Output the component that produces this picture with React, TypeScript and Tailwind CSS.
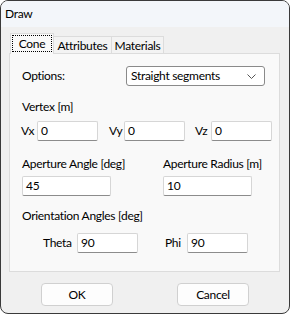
import React from 'react';

const font = { fontFamily: 'Lato, "Noto Sans", sans-serif', letterSpacing: '-0.3px' };

const TextBox: React.FC<{ value: string; className?: string }> = ({ value, className = '' }) => (
  <div
    className={`h-[20px] bg-white border border-[#d6d6d6] border-b-[#8c8c8c] rounded-[2px] flex items-center pl-[3px] text-[12px] leading-none text-black ${className}`}
  >
    {value}
  </div>
);

const Button: React.FC<{ label: string }> = ({ label }) => (
  <div className="w-[72px] h-[23px] bg-[#fdfdfd] border border-[#d0d0d0] rounded-[4px] flex items-center justify-center text-[12px] text-black">
    {label}
  </div>
);

const App: React.FC = () => {
  return (
    <div className="w-[291px] h-[315px] bg-white" style={font}>
      <div className="w-[290px] h-[314px] border border-[#3a3a3a] rounded-[8px] overflow-hidden flex flex-col bg-[#f0f0f0]">
        {/* title bar */}
        <div className="h-[26px] shrink-0 bg-[#f3f6fa] flex items-center pl-[4px] text-[12px] text-black">Draw</div>

        {/* tabs */}
        <div className="flex items-end h-[27px] pl-[9px] pt-[7px]">
          <div className="relative z-10 w-[44px] h-[21px] bg-[#f9f9f9] border border-[#dcdcdc] border-b-0 flex items-start justify-center pt-[1px]">
            <div className="w-[40px] h-[17px] border border-dotted border-black flex items-center justify-center text-[12px] leading-none">
              Cone
            </div>
          </div>
          <div className="w-[58px] h-[18px] bg-[#f3f3f3] border border-l-0 border-[#dcdcdc] border-b-0 flex items-center justify-center text-[12px] leading-none">
            Attributes
          </div>
          <div className="w-[52px] h-[18px] bg-[#f3f3f3] border border-l-0 border-[#dcdcdc] border-b-0 flex items-center justify-center text-[12px] leading-none">
            Materials
          </div>
        </div>

        {/* panel */}
        <div className="ml-[8px] w-[271px] h-[219px] -mt-px bg-[#f9f9f9] border border-[#dcdcdc] text-[12px] text-black">
          <div className="flex items-center h-[20px] mt-[12px] pl-[12px]">
            <div className="w-[104px]">Options:</div>
            <div className="w-[139px] h-[20px] bg-white border border-[#8a8a8a] rounded-[3px] flex items-center justify-between pl-[4px] pr-[8px]">
              <span>Straight segments</span>
              <svg width="9" height="5" viewBox="0 0 9 5">
                <polyline points="0.5,0.5 4.5,4.5 8.5,0.5" fill="none" stroke="#555" strokeWidth="1" />
              </svg>
            </div>
          </div>

          <div className="h-[16px] leading-[16px] mt-[13px] pl-[12px]">Vertex [m]</div>

          <div className="flex items-center h-[20px] mt-[6px] pl-[11px]">
            <div className="w-[16px]">Vx</div>
            <TextBox value="0" className="w-[61px]" />
            <div className="w-[15px] ml-[11px]">Vy</div>
            <TextBox value="0" className="w-[61px]" />
            <div className="w-[16px] ml-[10px]">Vz</div>
            <TextBox value="0" className="w-[61px]" />
          </div>

          <div className="flex h-[16px] leading-[16px] mt-[15px] pl-[12px]">
            <div className="w-[141px]">Aperture Angle [deg]</div>
            <div>Aperture Radius [m]</div>
          </div>

          <div className="flex h-[20px] mt-[4px] pl-[12px]">
            <TextBox value="45" className="w-[89px]" />
            <TextBox value="10" className="w-[89px] ml-[52px]" />
          </div>

          <div className="h-[16px] leading-[16px] mt-[12px] pl-[12px]">Orientation Angles [deg]</div>

          <div className="flex items-center h-[20px] mt-[9px] pl-[33px]">
            <div className="w-[34px]">Theta</div>
            <TextBox value="90" className="w-[61px]" />
            <div className="w-[22px] ml-[27px]">Phi</div>
            <TextBox value="90" className="w-[61px]" />
          </div>
        </div>

        {/* buttons */}
        <div className="flex mt-[11px] pl-[40px] gap-[64px]">
          <Button label="OK" />
          <Button label="Cancel" />
        </div>
      </div>
    </div>
  );
};

export default App;
